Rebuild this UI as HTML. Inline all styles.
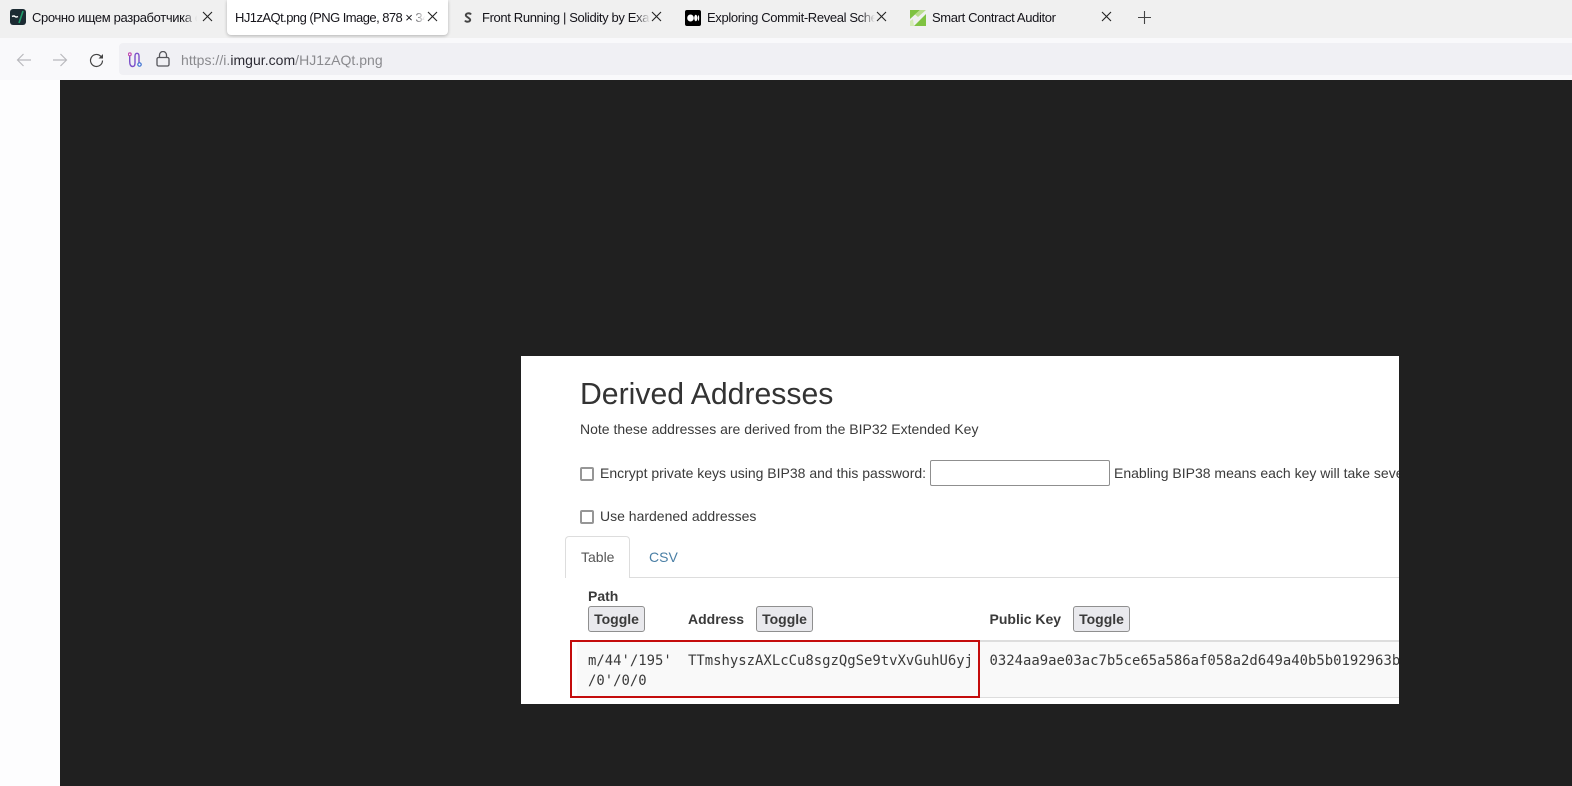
<!DOCTYPE html>
<html><head><meta charset="utf-8"><style>
*{box-sizing:border-box}
html,body{margin:0;padding:0;width:1572px;height:786px;overflow:hidden;background:#fff;font-family:"Liberation Sans","Noto Sans CJK SC",sans-serif}
.a{position:absolute;white-space:nowrap}
#tabs{left:0;top:0;width:1572px;height:38px;background:#f0f0f0}
#tool{left:0;top:38px;width:1572px;height:42px;background:#f9f9fb}
#url{left:119px;top:43px;width:1453px;height:32px;background:#f0f0f4;border-radius:4px 0 0 4px}
#dark{left:60px;top:80px;width:1512px;height:706px;background:#202020}
#left{left:0;top:80px;width:60px;height:706px;background:#fdfdfe}
#active{left:227px;top:0;width:221px;height:35px;background:#fff;border-radius:0 0 4px 4px;box-shadow:0 1px 3px rgba(0,0,0,.25)}
.t{top:8px;height:20px;line-height:20px;font-size:13px;letter-spacing:-.36px;color:#15141a;overflow:hidden}
.t i{position:absolute;right:0;top:0;width:14px;height:20px;background:linear-gradient(to right,rgba(240,240,240,0),#f0f0f0)}
.t.w i{background:linear-gradient(to right,rgba(255,255,255,0),#fff)}
.x{top:11px}
#img{left:521px;top:356px;width:878px;height:348px;background:#fff;overflow:hidden;color:#3a3a3a}
#img .a{line-height:20px;font-size:14px}
#img .h{font-size:30.2px;line-height:34px;color:#333}
.cb{position:absolute;width:14px;height:14px;border:2px solid #969696;border-radius:2px;background:#fff}
.btn{position:absolute;width:57px;height:26px;background:#e9e9ed;border:1px solid #8f8f8f;border-radius:3px;font-weight:bold;font-size:14px;line-height:24px;text-align:center;color:#3a3a3a}
#img .m{font-family:"DejaVu Sans Mono","Liberation Mono",monospace;font-size:13.93px;color:#3a3a3a}
</style></head><body>
<div class="a" id="tabs"></div>
<div class="a" id="tool"></div>
<div class="a" id="url"></div>
<div class="a" id="left"></div>
<div class="a" id="dark"></div>
<div class="a" id="active"></div>

<svg class="a" style="left:10px;top:9px" width="16" height="16" viewBox="0 0 16 16"><rect width="16" height="16" rx="3" fill="#1c2b33"/><path d="M2 7.500q2-1 3 0t3 0" stroke="#fff" stroke-width="1.400" fill="none"/><path d="M9 14L13 2" stroke="#1f9d6b" stroke-width="1.600"/></svg>
<div class="a t" style="left:32px;width:165px">Срочно ищем разработчика с<i></i></div>
<svg class="a x" style="left:202px" width="11" height="11" viewBox="0 0 11 11"><path d="M1 1l9 9M10 1l-9 9" stroke="#222" stroke-width="1.100"/></svg>

<div class="a t w" style="left:235px;width:190px;letter-spacing:-.55px">HJ1zAQt.png (PNG Image, 878 × 340<i></i></div>
<svg class="a x" style="left:427px" width="11" height="11" viewBox="0 0 11 11"><path d="M1 1l9 9M10 1l-9 9" stroke="#222" stroke-width="1.100"/></svg>

<svg class="a" style="left:464px;top:12px" width="8" height="11" viewBox="0 0 8 11"><path d="M7 2.500C6 .8 2.500.8 1.800 2.800 1.500 4 3 4.800 4 5.500M1 8.500C2 10.200 5.500 10.200 6.200 8.200 6.500 7 5 6.200 4 5.500" stroke="#444" stroke-width="1.900" fill="none"/></svg>
<div class="a t" style="left:482px;width:168px">Front Running | Solidity by Example<i></i></div>
<svg class="a x" style="left:651px" width="11" height="11" viewBox="0 0 11 11"><path d="M1 1l9 9M10 1l-9 9" stroke="#222" stroke-width="1.100"/></svg>

<svg class="a" style="left:685px;top:10px" width="16" height="16" viewBox="0 0 16 16"><rect width="16" height="16" rx="2" fill="#000"/><ellipse cx="5.500" cy="8" rx="3.300" ry="3.500" fill="#fff"/><ellipse cx="10.800" cy="8" rx="1.600" ry="3.200" fill="#fff"/><ellipse cx="13.500" cy="8" rx=".7" ry="2.900" fill="#fff"/></svg>
<div class="a t" style="left:707px;width:168px">Exploring Commit-Reveal Schemes<i></i></div>
<svg class="a x" style="left:876px" width="11" height="11" viewBox="0 0 11 11"><path d="M1 1l9 9M10 1l-9 9" stroke="#222" stroke-width="1.100"/></svg>

<svg class="a" style="left:910px;top:9px" width="16" height="17" viewBox="0 0 16 17"><path d="M0 1h10L0 10z" fill="#7fc241"/><path d="M10 1h6L8 8 5 5.500z" fill="#b9dd8c"/><path d="M16 5v12H4z" fill="#7fc241"/><path d="M0 12l3-2 1 7H0z" fill="#d3ebb5"/></svg>
<div class="a t" style="left:932px;width:165px">Smart Contract Auditor</div>
<svg class="a x" style="left:1101px" width="11" height="11" viewBox="0 0 11 11"><path d="M1 1l9 9M10 1l-9 9" stroke="#222" stroke-width="1.100"/></svg>
<svg class="a" style="left:1138px;top:11px" width="13" height="13" viewBox="0 0 13 13"><path d="M6.500 0v13M0 6.500h13" stroke="#444" stroke-width="1.100"/></svg>

<svg class="a" style="left:16px;top:52px" width="16" height="16" viewBox="0 0 16 16"><path d="M15 8H1.500M7.500 2L1.500 8l6 6" stroke="#b9b9bd" stroke-width="1.200" fill="none"/></svg>
<svg class="a" style="left:52px;top:52px" width="16" height="16" viewBox="0 0 16 16"><path d="M1 8h13.500M8.500 2l6 6-6 6" stroke="#b9b9bd" stroke-width="1.200" fill="none"/></svg>
<svg class="a" style="left:89px;top:53px" width="15" height="15" viewBox="0 0 15 15"><path d="M13.500 7.500a6 6 0 1 1-2-4.500L13.500 5" stroke="#444" stroke-width="1.200" fill="none"/><path d="M14 1v4.500H9.500z" fill="#444"/></svg>
<svg class="a" style="left:128px;top:52px" width="15" height="16" viewBox="0 0 15 16"><path d="M1.700 3.500V9.500c0 3 1 5 3 5s2.300-1.500 2.300-3.500V4c0-1.500.8-2.700 2-2.700s2 1.200 2 2.700v6.500" stroke="#7b4fc9" stroke-width="1.400" fill="none"/><circle cx="1.800" cy="2.300" r="1.400" fill="#fff" stroke="#c44fb0" stroke-width="1.200"/><circle cx="11.500" cy="12.500" r="1.700" fill="#fff" stroke="#3a6fd0" stroke-width="1.200"/></svg>
<svg class="a" style="left:156px;top:51px" width="14" height="16" viewBox="0 0 14 16"><rect x="1" y="6.500" width="12" height="8.500" rx="1.500" fill="none" stroke="#55555a" stroke-width="1.300"/><path d="M3.500 6.500V4a3.500 3.500 0 0 1 7 0v2.500" fill="none" stroke="#55555a" stroke-width="1.300"/></svg>
<div class="a" style="left:181px;top:50px;height:20px;line-height:20px;font-size:14px;letter-spacing:.03px;color:#8a8a8e">https://i.<span style="color:#2b2a33">imgur.com</span>/HJ1zAQt.png</div>

<div class="a" id="img">
  <div class="a h" style="left:59px;top:22px">Derived Addresses</div>
  <div class="a" style="left:59px;top:63px">Note these addresses are derived from the BIP32 Extended Key</div>
  <div class="cb" style="left:59px;top:111px"></div>
  <div class="a" style="left:79px;top:107px">Encrypt private keys using BIP38 and this password:</div>
  <div style="position:absolute;left:409px;top:104px;width:180px;height:26px;border:1px solid #8f8f8f;border-radius:2px"></div>
  <div class="a" style="left:593px;top:107px">Enabling BIP38 means each key will take several minutes to generate</div>
  <div class="cb" style="left:59px;top:154px"></div>
  <div class="a" style="left:79px;top:150px">Use hardened addresses</div>

  <div style="position:absolute;left:44px;top:221px;width:834px;height:1px;background:#ddd"></div>
  <div style="position:absolute;left:44px;top:180px;width:65px;height:42px;background:#fff;border:1px solid #ddd;border-bottom:0;border-radius:4px 4px 0 0"></div>
  <div class="a" style="left:60px;top:191px;color:#555">Table</div>
  <div class="a" style="left:128px;top:191px;color:#4a7fa5">CSV</div>

  <div class="a" style="left:67px;top:230px;font-weight:bold">Path</div>
  <div class="btn" style="left:67px;top:250px">Toggle</div>
  <div class="a" style="left:167px;top:253px;font-weight:bold">Address</div>
  <div class="btn" style="left:235px;top:250px">Toggle</div>
  <div class="a" style="left:468.5px;top:253px;font-weight:bold">Public Key</div>
  <div class="btn" style="left:552px;top:250px">Toggle</div>

  <div style="position:absolute;left:56px;top:284px;width:822px;height:58px;background:#f9f9f9;border-top:2px solid #ddd;border-bottom:1px solid #ddd"></div>
  <div class="a m" style="left:67px;top:295px">m/44'/195'</div>
  <div class="a m" style="left:67px;top:315px">/0'/0/0</div>
  <div class="a m" style="left:167px;top:295px">TTmshyszAXLcCu8sgzQgSe9tvXvGuhU6yj</div>
  <div class="a m" style="left:468.5px;top:295px">0324aa9ae03ac7b5ce65a586af058a2d649a40b5b0192963b8c1</div>
  <div style="position:absolute;left:49px;top:284px;width:410px;height:58px;border:2px solid #c40c0c"></div>
</div>
</body></html>
